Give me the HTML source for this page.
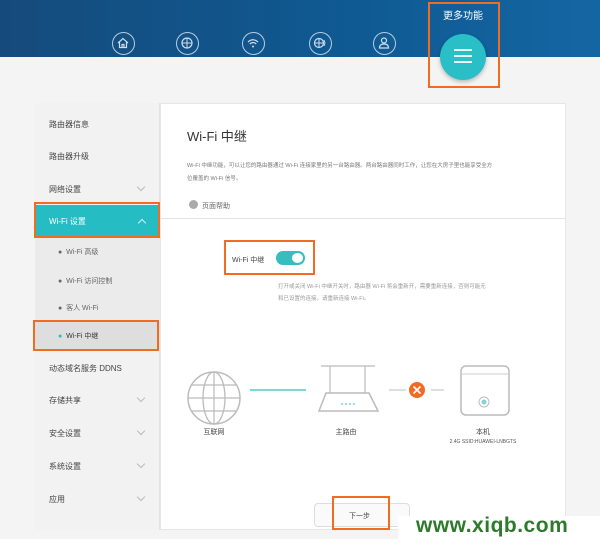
<!DOCTYPE html>
<html><head><meta charset="utf-8"><style>
*{margin:0;padding:0;box-sizing:border-box}
body{width:600px;height:539px;overflow:hidden;background:#f4f4f4;font-family:"Liberation Sans","Noto Sans CJK SC",sans-serif;position:relative}
.abs{position:absolute}
.hdr{left:0;top:0;width:600px;height:57px;background:linear-gradient(90deg,#154b7c,#0f5a93 60%,#1466a3)}
.ic{width:23px;height:23px;border:1.5px solid #b9cde0;border-radius:50%;top:32px}
.side{left:35px;top:103px;width:125px;height:427px;background:#f2f2f2;border-right:1px solid #e4e4e4}
.it{position:absolute;left:14px;font-size:8px;color:#444}
.chev{position:absolute;left:103px;width:6px;height:6px;border-right:1px solid #bbb;border-bottom:1px solid #bbb;transform:rotate(45deg)}
.main{left:160px;top:103px;width:406px;height:427px;background:#fff;border:1px solid #e6e6e6}
.ob{position:absolute;border:2.5px solid #f26b22}
.t{position:absolute;color:#999;font-size:5.5px;white-space:nowrap}
</style></head><body>
<div class="abs hdr"></div>
<div class="abs" style="left:443px;top:7px;color:#fff;font-size:10px">更多功能</div>
<div class="abs ic" style="left:112px"><svg width="20" height="20" viewBox="0 0 20 20" style="margin:0"><path d="M5 10 L10 5.5 L15 10 M6.5 9 V14.5 H13.5 V9 M9 14.5 V11.5 H11 V14.5" fill="none" stroke="#d0dceb" stroke-width="1.2"/></svg></div>
<div class="abs ic" style="left:176px"><svg width="20" height="20" viewBox="0 0 20 20"><circle cx="10" cy="10" r="5" fill="none" stroke="#d0dceb" stroke-width="1.2"/><path d="M5 10H15M10 5V15" stroke="#d0dceb" stroke-width="1"/></svg></div>
<div class="abs ic" style="left:242px"><svg width="20" height="20" viewBox="0 0 20 20"><path d="M5 9 Q10 4.5 15 9 M6.8 11 Q10 8 13.2 11" fill="none" stroke="#d0dceb" stroke-width="1.2"/><circle cx="10" cy="13.5" r="1" fill="#d0dceb"/></svg></div>
<div class="abs ic" style="left:309px"><svg width="20" height="20" viewBox="0 0 20 20"><circle cx="9" cy="10" r="4.5" fill="none" stroke="#d0dceb" stroke-width="1.2"/><path d="M4.5 10H13.5M9 5.5V14.5M14 7 L15 10 L14 13" fill="none" stroke="#d0dceb" stroke-width="1"/></svg></div>
<div class="abs ic" style="left:373px"><svg width="20" height="20" viewBox="0 0 20 20"><circle cx="10" cy="7.5" r="2.5" fill="none" stroke="#d0dceb" stroke-width="1.2"/><path d="M5.5 15 Q5.5 11 10 11 Q14.5 11 14.5 15Z" fill="none" stroke="#d0dceb" stroke-width="1.2"/></svg></div>
<div class="abs" style="left:440px;top:34px;width:46px;height:46px;border-radius:50%;background:#2abfc6;box-shadow:0 2px 4px rgba(0,0,0,.25)"></div>
<div class="abs" style="left:454px;top:49px;width:18px;height:2px;background:#e9fbfc;box-shadow:0 6px 0 #e9fbfc,0 12px 0 #e9fbfc"></div>
<div class="ob" style="left:428px;top:2px;width:72px;height:86px"></div>

<div class="abs side">
<div class="it" style="top:16px">路由器信息</div>
<div class="it" style="top:48px">路由器升级</div>
<div class="it" style="top:81px">网络设置</div><div class="chev" style="top:81px"></div>
<div style="position:absolute;left:0;top:102px;width:125px;height:31px;background:#26bcc4"></div>
<div class="it" style="top:113px;color:#fff">Wi-Fi 设置</div>
<div style="position:absolute;left:104px;top:117px;width:6px;height:6px;border-left:1px solid #c9f0f2;border-top:1px solid #c9f0f2;transform:rotate(45deg)"></div>
<div style="position:absolute;left:0;top:133px;width:125px;height:114px;background:#ebebeb"></div>
<div style="position:absolute;left:0;top:219px;width:125px;height:28px;background:#dedede"></div>
<div class="it" style="top:144px;left:23px;font-size:7px;color:#666">● &nbsp;Wi-Fi 高级</div>
<div class="it" style="top:173px;left:23px;font-size:7px;color:#666">● &nbsp;Wi-Fi 访问控制</div>
<div class="it" style="top:200px;left:23px;font-size:7px;color:#666">● &nbsp;客人 Wi-Fi</div>
<div class="it" style="top:228px;left:23px;font-size:7px;color:#333"><span style="color:#26bcc4">●</span> &nbsp;Wi-Fi 中继</div>
<div class="it" style="top:260px">动态域名服务 DDNS</div>
<div class="it" style="top:292px">存储共享</div><div class="chev" style="top:292px"></div>
<div class="it" style="top:325px">安全设置</div><div class="chev" style="top:325px"></div>
<div class="it" style="top:358px">系统设置</div><div class="chev" style="top:358px"></div>
<div class="it" style="top:391px">应用</div><div class="chev" style="top:391px"></div>
</div>
<div class="ob" style="left:34px;top:202px;width:126px;height:36px"></div>
<div class="ob" style="left:33px;top:320px;width:126px;height:31px"></div>

<div class="abs main">
<div style="position:absolute;left:26px;top:22px;font-size:13px;color:#333">Wi-Fi 中继</div>
<div class="t" style="left:26px;top:57px;color:#777">Wi-Fi 中继功能，可以让您的路由器通过 Wi-Fi 连接家里的另一台路由器。两台路由器同时工作，让您在大房子里也能享受全方</div>
<div class="t" style="left:26px;top:70px;color:#777">位覆盖的 Wi-Fi 信号。</div>
<div style="position:absolute;left:28px;top:96px;width:9px;height:9px;border-radius:50%;background:#aaa"></div>
<div class="t" style="left:41px;top:97px;font-size:7px;color:#666">页面帮助</div>
<div style="position:absolute;left:0;top:114px;width:404px;height:1px;background:#e3e3e3"></div>
<div class="t" style="left:71px;top:151px;font-size:7px;color:#444">Wi-Fi 中继</div>
<div style="position:absolute;left:115px;top:147px;width:29px;height:14px;border-radius:7px;background:#35bdbf"></div>
<div style="position:absolute;left:131px;top:149px;width:11px;height:10px;border-radius:50%;background:#fff"></div>
<div class="t" style="left:117px;top:178px">打开或关闭 Wi-Fi 中继开关时，路由器 Wi-Fi 将会重新开，需要重新连接，否则可能无</div>
<div class="t" style="left:117px;top:190px">和已设置的连接，请重新连接 Wi-Fi。</div>
<svg style="position:absolute;left:0;top:237px" width="404" height="110">
<circle cx="53" cy="57" r="26" fill="none" stroke="#bbb" stroke-width="1.5"/>
<ellipse cx="53" cy="57" rx="11" ry="26" fill="none" stroke="#bbb" stroke-width="1.3"/>
<path d="M27 57H79M53 31V83M31 44H75M31 70H75" stroke="#bbb" stroke-width="1.2"/>
<line x1="89" y1="49" x2="145" y2="49" stroke="#7fd6d8" stroke-width="2"/>
<path d="M160 25H214M169 25V52M204 25V52" stroke="#bbb" stroke-width="1.2"/>
<path d="M165 52H208L217 70H158Z" fill="none" stroke="#bbb" stroke-width="1.5"/>
<path d="M180 63H196" stroke="#7fd6d8" stroke-width="1.5" stroke-dasharray="2 2"/>
<path d="M228 49H245M270 49H283" stroke="#ccc" stroke-width="1.2"/>
<circle cx="256" cy="49" r="8" fill="#f26b22"/>
<path d="M252.5 45.5L259.5 52.5M259.5 45.5L252.5 52.5" stroke="#fff" stroke-width="1.6"/>
<rect x="300" y="25" width="48" height="49" rx="5" fill="none" stroke="#bbb" stroke-width="1.5"/>
<path d="M301 33H347" stroke="#ccc"/>
<circle cx="323" cy="61" r="5" fill="none" stroke="#bbb"/><circle cx="323" cy="61" r="2.5" fill="#7fd6d8"/>
<text x="53" y="93" font-size="7" fill="#444" text-anchor="middle" font-family="Liberation Sans,Noto Sans CJK SC,sans-serif">互联网</text>
<text x="185" y="93" font-size="7" fill="#444" text-anchor="middle" font-family="Liberation Sans,Noto Sans CJK SC,sans-serif">主路由</text>
<text x="322" y="93" font-size="7" fill="#444" text-anchor="middle" font-family="Liberation Sans,Noto Sans CJK SC,sans-serif">本机</text>
<text x="322" y="102" font-size="5" fill="#555" text-anchor="middle" font-family="Liberation Sans,sans-serif">2.4G SSID:HUAWEI-LNBGTS</text>
</svg>
<div style="position:absolute;left:153px;top:399px;width:96px;height:24px;border:1px solid #ddd;border-radius:4px;background:#fafafa"></div>
<div class="t" style="left:188px;top:407px;font-size:7px;color:#444">下一步</div>
</div>
<div class="ob" style="left:224px;top:240px;width:91px;height:35px"></div>
<div class="ob" style="left:332px;top:496px;width:58px;height:34px"></div>
<div class="abs" style="left:398px;top:516px;width:202px;height:23px;background:#fff"></div>
<div class="abs" style="left:416px;top:514px;font-size:21px;font-weight:bold;color:#2d7a2a;letter-spacing:0.5px">www.xiqb.com</div>
</body></html>
